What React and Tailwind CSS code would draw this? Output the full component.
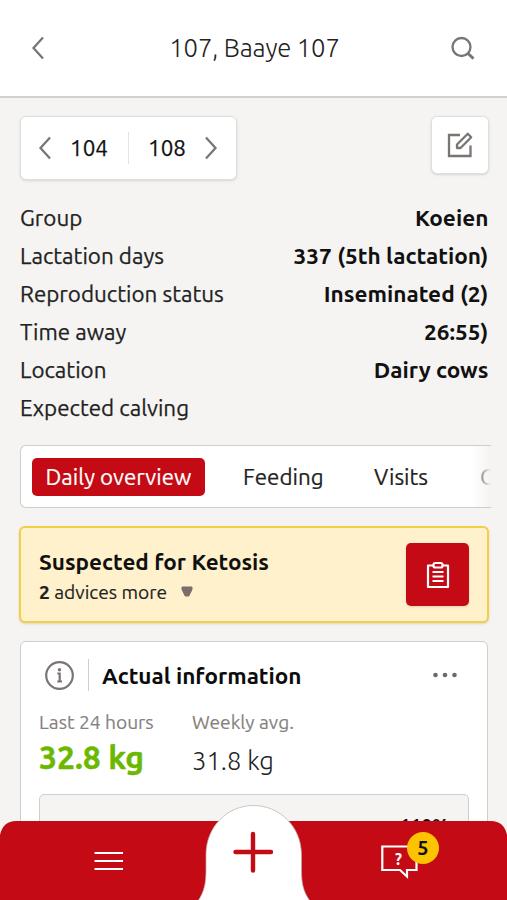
const details = [
  { label: 'Group', value: 'Koeien' },
  { label: 'Lactation days', value: '337 (5th lactation)' },
  { label: 'Reproduction status', value: 'Inseminated (2)' },
  { label: 'Time away', value: '26:55)' },
  { label: 'Location', value: 'Dairy cows' },
  { label: 'Expected calving', value: '' },
];

function Chevron({ right = false }) {
  return (
    <svg width="14" height="24" viewBox="0 0 14 24" fill="none" stroke="#7a7572" strokeWidth="2.3" className="shrink-0">
      <path d={right ? 'M2 1.5L11.5 12L2 22.5' : 'M12 1.5L2.5 12L12 22.5'} />
    </svg>
  );
}

function Header() {
  return (
    <header className="flex h-[98px] shrink-0 items-center justify-between border-b-2 border-[#d2d1cf] bg-white pl-[31px] pr-[32px]">
      <Chevron />
      <h1 className="pl-[13px] text-[25.6px] font-light leading-8 tracking-[-0.15px] text-[#222]">107, Baaye 107</h1>
      <svg width="24" height="24" viewBox="0 0 24 24" fill="none" stroke="#7a7572" strokeWidth="2.3">
        <circle cx="10.5" cy="11" r="9" />
        <path d="M16.8 17.3L22.5 22.6" strokeWidth="2.8" />
      </svg>
    </header>
  );
}

function Toolbar() {
  return (
    <div className="flex items-start justify-between">
      <div className="flex h-[64px] w-[217px] items-center rounded-md border-[1.5px] border-[#dededb] bg-white pl-[17px] shadow-sm">
        <Chevron />
        <span className="ml-[18px] w-[38px] text-[22.4px] text-[#111] [-webkit-text-stroke:0.25px]">104</span>
        <span className="ml-[20px] h-8 w-px bg-[#e4e3e1]" />
        <span className="ml-[19px] w-[38px] text-[22.4px] text-[#111] [-webkit-text-stroke:0.25px]">108</span>
        <span className="ml-[18px] flex"><Chevron right /></span>
      </div>
      <div className="-mr-px flex size-[58px] items-center justify-center rounded-md border-[1.5px] border-[#dededb] bg-white shadow-sm">
        <svg width="26" height="26" viewBox="0 0 26 26" fill="none" stroke="#7a7572" strokeWidth="2.3">
          <path d="M13 3H2V24H23.5V13.5" />
          <path d="M10 16V12.5L20.8 1.8L24.2 5.2L13.5 16H10Z" strokeLinejoin="round" />
        </svg>
      </div>
    </div>
  );
}

function Details() {
  return (
    <dl className="mt-[19px] flex flex-col text-[22.4px]">
      {details.map((d) => (
        <div key={d.label} className="flex h-[37.9px] items-center justify-between whitespace-nowrap">
          <dt className="[-webkit-text-stroke:0.25px]">{d.label}</dt>
          <dd className="text-[22.6px] font-bold text-[#111]">{d.value}</dd>
        </div>
      ))}
    </dl>
  );
}

function Tabs() {
  return (
    <div className="relative mt-[19px] flex h-[63px] w-[471px] items-center overflow-hidden whitespace-nowrap rounded-l-md border-y-[1.5px] border-l-[1.5px] border-[#cfcecb] bg-white pl-[11px] text-[22.4px] [-webkit-text-stroke:0.2px]">
      <div className="flex h-[38px] w-[173px] shrink-0 items-center justify-center rounded-[5px] bg-[#c40a14] text-white">Daily overview</div>
      <div className="ml-[38px] w-[80px] shrink-0">Feeding</div>
      <div className="ml-[51px] w-[54px] shrink-0">Visits</div>
      <div className="ml-[52px] shrink-0">C</div>
      <div className="absolute -inset-y-0.5 right-0 w-[21px] bg-gradient-to-r from-[#f5f4f2]/0 to-[#f5f4f2]" />
    </div>
  );
}

function Advice() {
  return (
    <div className="-ml-px -mr-px mt-[18px] flex h-[97px] items-center justify-between rounded-md border-2 border-[#f2cf43] bg-[#fff1cc] px-[18px] shadow-sm">
      <div className="whitespace-nowrap pt-[5px]">
        <div className="text-[22.5px] font-bold leading-[30px] text-[#111]">Suspected for Ketosis</div>
        <div className="flex items-center text-[19.2px] leading-[30px] [-webkit-text-stroke:0.15px]">
          <span><b>2</b> advices more</span>
          <svg width="12" height="11" viewBox="0 0 12 11" className="mb-[2px] ml-[14px]">
            <path d="M1 1H11V3.5L7.8 10H4.2L1 3.5Z" fill="#7a6f6b" stroke="#7a6f6b" strokeLinejoin="round" />
          </svg>
        </div>
      </div>
      <div className="flex size-[63px] items-center justify-center rounded-[5px] bg-[#c40a14] shadow-sm">
        <svg width="24" height="28" viewBox="0 0 24 28" fill="none" stroke="#fff" strokeWidth="2.2">
          <path d="M7 4.5H2V26H22V4.5H17" strokeLinejoin="round" />
          <rect x="7.5" y="2" width="9" height="4.5" rx="1.8" />
          <path d="M6.5 11H17.5M6.5 15.5H17.5M6.5 20H17.5" />
        </svg>
      </div>
    </div>
  );
}

function ActualInfo() {
  return (
    <div className="mt-[18px] flex h-[300px] flex-col whitespace-nowrap rounded-md border-[1.5px] border-[#cfcecb] bg-white px-[18px]">
      <div className="mt-[17px] flex h-8 items-center pl-[5px]">
        <svg width="31" height="31" viewBox="0 0 31 31" fill="none" stroke="#7a7572" strokeWidth="2.2">
          <circle cx="15.5" cy="15.5" r="13.3" />
          <path d="M13.3 13.5H15.7V21.5M13.3 21.5H18" />
          <circle cx="15.5" cy="9.800" r="1.7" fill="#7a7572" stroke="none" />
        </svg>
        <span className="ml-[13px] h-8 w-px bg-[#cfcecb]" />
        <h2 className="ml-[13px] pt-[2px] text-[22.5px] font-bold text-[#0c0c0c]">Actual information</h2>
        <svg width="26" height="6" viewBox="0 0 26 6" fill="#6e6966" className="ml-auto mr-[11px]">
          <circle cx="3.5" cy="3" r="2.3" />
          <circle cx="13" cy="3" r="2.3" />
          <circle cx="22.5" cy="3" r="2.3" />
        </svg>
      </div>
      <div className="mt-[17px] flex">
        <div className="w-[153px]">
          <div className="text-[19.2px] leading-7 text-[#85817e] [-webkit-text-stroke:0.15px]">Last 24 hours</div>
          <div className="text-[31.9px] font-bold leading-[42px] text-[#6cb800] [-webkit-text-stroke:0.4px]">32.8 kg</div>
        </div>
        <div>
          <div className="text-[19.2px] leading-7 text-[#85817e] [-webkit-text-stroke:0.15px]">Weekly avg.</div>
          <div className="pt-[3px] text-[25.6px] font-light leading-[44px] text-[#222]">31.8 kg</div>
        </div>
      </div>
      <div className="mt-[11px] h-[150px] rounded-[5px] border-[1.5px] border-[#cfcecb] bg-[#f5f4f2]">
        <div className="pr-[19px] pt-[16px] text-right text-[19.2px] font-bold leading-7 text-[#111]">110%</div>
      </div>
    </div>
  );
}

function BottomBar() {
  return (
    <nav className="absolute inset-x-0 bottom-0 h-[96px]">
      <svg width="507" height="96" viewBox="0 0 507 96" fill="none" className="absolute inset-0">
        <path d="M0 96V31Q3 17 16 17H491Q504 17 507 31V96Z" fill="#c40a14" />
        <path d="M198 97C204 88 206 80 206 66V51C206 22 228 1.5 253.5 1.5S301.5 22 301.5 51V66C301.5 80 303.5 88 310 97Z" fill="#fff" stroke="#b9afab" strokeOpacity=".7" />
        <path d="M253 30V66.5M235.5 48H271" stroke="#c40a14" strokeWidth="4.4" strokeLinecap="round" />
        <path d="M94.5 49H123M94.5 57H123M94.5 65H123" stroke="#fff" strokeWidth="2.2" />
        <path d="M382.3 42.5H416.5V66H407V72.5L400 66H382.3Z" stroke="#fff" strokeWidth="2.2" />
      </svg>
      <span className="absolute left-[395px] top-[45px] text-[16px] font-bold leading-5 text-white">?</span>
      <span className="absolute left-[407px] top-[28px] flex size-8 items-center justify-center rounded-full bg-[#fdc300] text-[20px] font-bold leading-none text-[#111]">5</span>
    </nav>
  );
}

export default function App() {
  return (
    <div className="relative flex h-[900px] w-[507px] flex-col overflow-hidden bg-[#f5f4f2] font-['Ubuntu','Noto_Sans',sans-serif] text-[#222]">
      <Header />
      <main className="flex shrink-0 flex-col pl-[20px] pr-[18.6px] pt-[18px]">
        <Toolbar />
        <Details />
        <Tabs />
        <Advice />
        <ActualInfo />
      </main>
      <BottomBar />
    </div>
  );
}
